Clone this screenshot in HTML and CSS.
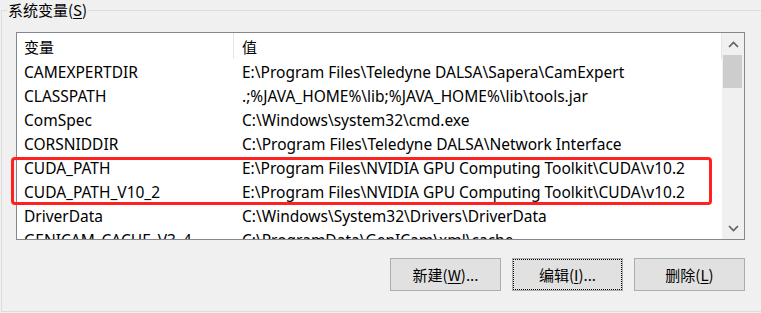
FILE: index.html
```html
<!DOCTYPE html>
<html lang="zh-CN">
<head>
<meta charset="utf-8">
<title>系统变量</title>
<link rel="stylesheet" href="styles.css">
</head>
<body>
<fieldset class="group">
  <legend class="group-title">系统变量(<u>S</u>)</legend>
  <div class="listbox">
    <div class="list">
      <div class="header">
        <div class="hcell hname">变量</div>
        <div class="hcell hvalue">值</div>
      </div>
      <div class="row"><span class="name">CAMEXPERTDIR</span><span class="value">E:\Program Files\Teledyne DALSA\Sapera\CamExpert</span></div>
      <div class="row"><span class="name">CLASSPATH</span><span class="value">.;%JAVA_HOME%\lib;%JAVA_HOME%\lib\tools.jar</span></div>
      <div class="row"><span class="name">ComSpec</span><span class="value">C:\Windows\system32\cmd.exe</span></div>
      <div class="row"><span class="name">CORSNIDDIR</span><span class="value">C:\Program Files\Teledyne DALSA\Network Interface</span></div>
      <div class="row"><span class="name">CUDA_PATH</span><span class="value">E:\Program Files\NVIDIA GPU Computing Toolkit\CUDA\v10.2</span></div>
      <div class="row"><span class="name">CUDA_PATH_V10_2</span><span class="value">E:\Program Files\NVIDIA GPU Computing Toolkit\CUDA\v10.2</span></div>
      <div class="row"><span class="name">DriverData</span><span class="value">C:\Windows\System32\Drivers\DriverData</span></div>
      <div class="row"><span class="name">GENICAM_CACHE_V3_4</span><span class="value">C:\ProgramData\GenICam\xml\cache</span></div>
    </div>
    <div class="scrollbar">
      <div class="sb-btn">
        <svg width="11" height="7" viewBox="0 0 11 7"><path d="M1 6 L5.5 1.5 L10 6" fill="none" stroke="#606060" stroke-width="1.6"/></svg>
      </div>
      <div class="sb-track"><div class="sb-thumb"></div></div>
      <div class="sb-btn">
        <svg width="11" height="7" viewBox="0 0 11 7"><path d="M1 1 L5.5 5.5 L10 1" fill="none" stroke="#606060" stroke-width="1.6"/></svg>
      </div>
    </div>
    <div class="highlight"></div>
  </div>
  <div class="buttons">
    <button class="btn">新建(<u>W</u>)...</button>
    <button class="btn focused">编辑(<u>I</u>)...</button>
    <button class="btn">删除(<u>L</u>)</button>
  </div>
</fieldset>
</body>
</html>
```

FILE: styles.css
```css
html, body {
  margin: 0;
  padding: 0;
}
body {
  width: 761px;
  height: 313px;
  overflow: hidden;
  background: #f0f0f0;
  font-family: "Noto Sans", "Noto Sans CJK SC", sans-serif;
  font-size: 15px;
  color: #000;
}
.group {
  margin: 0 0 0 1px;
  width: 760px;
  border: 1px solid #dcdcdc;
  border-right: none;
  padding: 12px 0 19px 14px;
  box-sizing: border-box;
  height: 312px;
  min-width: 0;
}
.group-title {
  margin-left: -9px;
  padding: 0 1px;
  line-height: 20px;
  height: 20px;
  font-family: "Noto Sans CJK SC", sans-serif;
  font-size: 15px;
  color: #000;
}
.group-title u,
.btn u {
  text-decoration-thickness: 1px;
  text-underline-offset: 2px;
}
.listbox {
  position: relative;
  display: flex;
  width: 729px;
  height: 208px;
  box-sizing: border-box;
  border: 1px solid #828790;
  background: #fff;
}
.list {
  flex: 1;
  overflow: hidden;
  min-width: 0;
}
.header {
  display: flex;
  height: 27px;
}
.hcell {
  font-family: "Noto Sans CJK SC", sans-serif;
  line-height: 28px;
  height: 26px;
  box-sizing: border-box;
  border-right: 1px solid #e5e5e5;
}
.hname {
  width: 217px;
  padding-left: 7px;
}
.hvalue {
  flex: 1;
  padding-left: 8px;
}
.row {
  display: flex;
  height: 24px;
  line-height: 24px;
  font-size: 15.5px;
  white-space: nowrap;
}
.name {
  width: 217px;
  flex: none;
  padding-left: 7px;
  box-sizing: border-box;
}
.value {
  padding-left: 8px;
}
.scrollbar {
  width: 22px;
  flex: none;
  display: flex;
  flex-direction: column;
  background: #f0f0f0;
}
.sb-btn {
  height: 22px;
  display: flex;
  align-items: center;
  justify-content: center;
  flex: none;
}
.sb-track {
  flex: 1;
}
.sb-thumb {
  height: 33px;
  margin: 0 2px 0 1px;
  background: #cdcdcd;
}
.highlight {
  position: absolute;
  left: -6px;
  top: 124px;
  width: 701px;
  height: 48px;
  box-sizing: border-box;
  border: 3px solid #ff2020;
  border-radius: 4px;
  pointer-events: none;
}
.buttons {
  width: 729px;
  margin-top: 18px;
  display: flex;
  justify-content: flex-end;
  gap: 11px;
}
.btn {
  width: 111px;
  height: 33px;
  margin: 0;
  padding: 0;
  border: 1px solid #adadad;
  background: #e1e1e1;
  font-family: "Noto Sans CJK SC", sans-serif;
  font-size: 15px;
  color: #000;
  border-radius: 0;
}
.btn.focused {
  outline: 1px dotted #000;
  outline-offset: -2px;
}
```
